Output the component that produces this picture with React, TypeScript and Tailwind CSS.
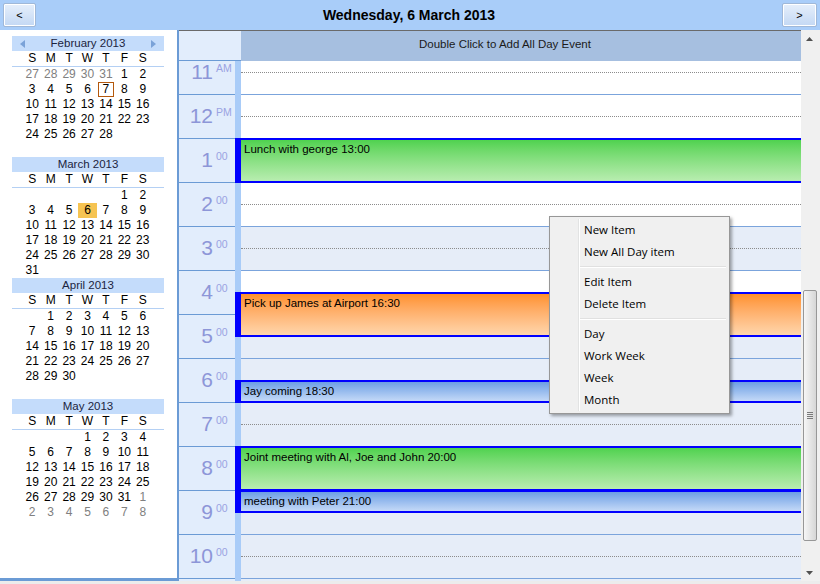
import React from "react";

type Cell = { d: number; muted?: boolean; today?: boolean; selected?: boolean } | null;

interface MonthProps {
  title: string;
  rows: Cell[][];
  arrows?: boolean;
}

const DAY_NAMES = ["S", "M", "T", "W", "T", "F", "S"];

const seq = (from: number, to: number, extra: Partial<NonNullable<Cell>> = {}): Cell[] =>
  Array.from({ length: to - from + 1 }, (_, i) => ({ d: from + i, ...extra }));

const MONTHS: MonthProps[] = [
  {
    title: "February 2013",
    arrows: true,
    rows: [
      [...seq(27, 31, { muted: true }), ...seq(1, 2)],
      [...seq(3, 6), { d: 7, today: true }, ...seq(8, 9)],
      seq(10, 16),
      seq(17, 23),
      seq(24, 28),
      [],
    ],
  },
  {
    title: "March 2013",
    rows: [
      [null, null, null, null, null, ...seq(1, 2)],
      [...seq(3, 5), { d: 6, selected: true }, ...seq(7, 9)],
      seq(10, 16),
      seq(17, 23),
      seq(24, 30),
      seq(31, 31),
    ],
  },
  {
    title: "April 2013",
    rows: [[null, ...seq(1, 6)], seq(7, 13), seq(14, 20), seq(21, 27), seq(28, 30), []],
  },
  {
    title: "May 2013",
    rows: [
      [null, null, null, ...seq(1, 4)],
      seq(5, 11),
      seq(12, 18),
      seq(19, 25),
      [...seq(26, 31), { d: 1, muted: true }],
      seq(2, 8, { muted: true }),
    ],
  },
];

function MiniMonth({ title, rows, arrows }: MonthProps) {
  return (
    <div className="w-[152px]">
      {/* Month title bar */}
      <div className="relative h-[15px] bg-[#c4dcfb] text-center text-[11.5px] leading-[15px] text-[#1b2440]">
        {arrows && (
          <svg className="absolute left-[8px] top-[4px]" width="6" height="8" viewBox="0 0 6 8">
            <path d="M5 0 L0 4 L5 8 Z" fill="#7aa2d8" />
          </svg>
        )}
        {title}
        {arrows && (
          <svg className="absolute left-[139px] top-[4px]" width="6" height="8" viewBox="0 0 6 8">
            <path d="M0 0 L5 4 L0 8 Z" fill="#7aa2d8" />
          </svg>
        )}
      </div>
      <div className="ml-[11px] grid w-[129px] grid-cols-7 text-center text-[12px] leading-[15px] text-black">
        {DAY_NAMES.map((n, i) => (
          <div key={i} className="h-[15px]">
            {n}
          </div>
        ))}
      </div>
      <div className="h-px bg-[#b4d0f4]" />
      <div className="ml-[11px] w-[129px]">
        {rows.map((row, r) => (
          <div key={r} className="grid h-[15px] grid-cols-7 text-center text-[12px] leading-[15px]">
            {row.map((c, i) =>
              c === null ? (
                <div key={i} />
              ) : (
                <div
                  key={i}
                  className={`flex h-[15px] items-center justify-center ${
                    c.selected ? "bg-[#f6c452]" : ""
                  } ${c.muted ? "text-[#808080]" : "text-black"}`}
                >
                  {c.today ? (
                    <span className="inline-block h-[15px] w-[16px] border border-[#b4580c] leading-[13px]">
                      {c.d}
                    </span>
                  ) : (
                    c.d
                  )}
                </div>
              )
            )}
          </div>
        ))}
      </div>
    </div>
  );
}

// the last row (23:00) is scrolled out of view, only its top line shows
const HOURS: { n: string; s: string }[] = [
  { n: "11", s: "AM" },
  { n: "12", s: "PM" },
  ...["1", "2", "3", "4", "5", "6", "7", "8", "9", "10"].map((n) => ({ n, s: "00" })),
  { n: "", s: "" },
];

// rows from 11:00; 8-17 are work hours, 15:00 is the selected slot
const rowTone = (i: number) => (i === 4 || i >= 6 ? "bg-[#e6edf8]" : "bg-white");

const GREEN = "bg-gradient-to-b from-[#4fd24f] to-[#b8edb0]";
const ORANGE = "bg-gradient-to-b from-[#ff9128] to-[#ffd6ac]";
const BLUE = "bg-gradient-to-b from-[#6d9fe4] to-[#c4d9f7]";

const EVENTS = [
  { start: 13, dur: 1, label: "Lunch with george 13:00", tone: GREEN },
  { start: 16.5, dur: 1, label: "Pick up James at Airport 16:30", tone: ORANGE },
  { start: 18.5, dur: 0.5, label: "Jay coming 18:30", tone: BLUE },
  { start: 20, dur: 1, label: "Joint meeting with Al, Joe and John 20:00", tone: GREEN },
  { start: 21, dur: 0.5, label: "meeting with Peter 21:00", tone: BLUE },
];

const ROW_H = 44;

function ContextMenu() {
  const groups = [["New Item", "New All Day item"], ["Edit Item", "Delete Item"], ["Day", "Work Week", "Week", "Month"]];
  return (
    <div className="absolute left-[549px] top-[216px] w-[181px] border border-[#979797] bg-[#f0f0f0] p-[2px] shadow-[2px_2px_3px_rgba(0,0,0,0.35)] font-['Open_Sans',sans-serif] text-[11.5px] text-black">
      <div className="absolute bottom-[2px] left-[28px] top-[2px] w-[2px] border-l border-r border-l-[#e2e3e3] border-r-white" />
      {groups.map((g, gi) => (
        <div key={gi}>
          {gi > 0 && (
            <div className="flex h-[8px] items-center pl-[28px] pr-px">
              <div className="h-[2px] w-full border-t border-b border-t-[#e0e0e0] border-b-white" />
            </div>
          )}
          {g.map((item) => (
            <div key={item} className="h-[22px] pl-[32px] leading-[22px]">
              {item}
            </div>
          ))}
        </div>
      ))}
    </div>
  );
}

function Scrollbar() {
  return (
    <div className="flex h-full w-[17px] flex-col bg-[#f0f0f0]">
      <div className="flex h-[17px] items-center justify-center">
        <svg width="7" height="4" viewBox="0 0 7 4">
          <path d="M3.5 0 L7 4 L0 4 Z" fill="#505050" />
        </svg>
      </div>
      <div className="flex flex-1 flex-col">
        <div className="h-[243px]" />
        <div className="ml-[2px] flex h-[251px] w-[14px] flex-col items-center justify-center gap-[1px] rounded-[2px] border border-[#979797] bg-gradient-to-r from-[#f6f6f6] to-[#d6d6d6]">
          {[0, 1, 2, 3].map((i) => (
            <div key={i} className="h-px w-[6px] bg-[#7a7a7a]" />
          ))}
        </div>
      </div>
      <div className="flex h-[17px] items-center justify-center">
        <svg width="7" height="4" viewBox="0 0 7 4">
          <path d="M0 0 L7 0 L3.5 4 Z" fill="#505050" />
        </svg>
      </div>
    </div>
  );
}

export default function App() {
  return (
    <div className="relative h-[584px] w-[820px] overflow-hidden bg-[#ececec] font-['Liberation_Sans',Arial,sans-serif]">
      {/* Header with navigation */}
      <div className="flex h-[30px] items-center bg-[#a9cdf9] px-[3px]">
        <button className="h-[24px] w-[33px] rounded-[2px] border border-[#a0b8d8] bg-gradient-to-b from-[#e6effb] to-[#c3d8f4] text-[11px] text-black shadow-[inset_0_0_0_1px_#ffffff]">
          &lt;
        </button>
        <div className="flex-1 text-center text-[14px] font-bold text-black">Wednesday, 6 March 2013</div>
        <button className="h-[24px] w-[35px] rounded-[2px] border border-[#a0b8d8] bg-gradient-to-b from-[#e6effb] to-[#c3d8f4] text-[11px] text-black shadow-[inset_0_0_0_1px_#ffffff]">
          &gt;
        </button>
      </div>

      <div className="flex h-[551px]">
        {/* Month calendars */}
        <div className="flex h-full w-[179px] flex-col border-b-[3px] border-r-2 border-[#6b9bd5] bg-white pl-[12px] pt-[6px]">
          {MONTHS.map((m) => (
            <MiniMonth key={m.title} {...m} />
          ))}
        </div>

        {/* Day view */}
        <div className="flex flex-1 flex-col">
          <div className="flex h-full">
            <div className="flex w-[622px] flex-col">
              <div className="h-px bg-[#6a6a6a]" />
              <div className="flex h-[30px]">
                <div className="w-[62px] border-b border-[#6b9bd5] bg-[#e2edfc]" />
                <div className="flex-1 bg-[#a6bfe0] pr-[32px] pt-[5px] text-center text-[11.5px] text-[#1a1a1a]">
                  Double Click to Add All Day Event
                </div>
              </div>
              <div className="relative flex-1 overflow-hidden">
                <div className="relative mt-[-11px] flex">
                  {/* Time ruler */}
                  <div className="w-[56px] bg-[#e2edfc]">
                    {HOURS.map((h, i) => (
                      <div
                        key={i}
                        className="flex h-[44px] items-start justify-end border-t border-[#6b9bd5] pr-[4px] pt-[11px]"
                      >
                        <span className="text-[21px] leading-[20px] text-[#8d96d8]">{h.n}</span>
                        <span className="ml-[3px] w-[15px] pt-[1px] text-[10.5px] leading-[11px] text-[#9aa2e2]">{h.s}</span>
                      </div>
                    ))}
                  </div>
                  <div className="w-[6px] bg-[#a9ccf8]" />
                  {/* Slots */}
                  <div className="flex-1">
                    {HOURS.map((_, i) => (
                      <div key={i} className={`h-[44px] border-t border-[#7ba4dc] ${rowTone(i)}`}>
                        <div className="h-[21px]" />
                        <div className="h-[22px] border-t border-dotted border-[#8c8c8c]" />
                      </div>
                    ))}
                  </div>

                  {/* Appointments */}
                  {EVENTS.map((e) => (
                    <div
                      key={e.label}
                      className="absolute left-[56px] right-0 bg-[#0000ff] py-[2px] pl-[6px]"
                      style={{ top: (e.start - 11) * ROW_H, height: e.dur * ROW_H + 1 }}
                    >
                      <div className={`h-full pl-[3px] pt-[3px] text-[11.5px] leading-[13px] text-black ${e.tone}`}>
                        {e.label}
                      </div>
                    </div>
                  ))}
                </div>
              </div>
            </div>
            <Scrollbar />
            <div className="w-[2px] bg-[#f0f0f0]" />
          </div>
        </div>
      </div>

      <ContextMenu />
    </div>
  );
}
